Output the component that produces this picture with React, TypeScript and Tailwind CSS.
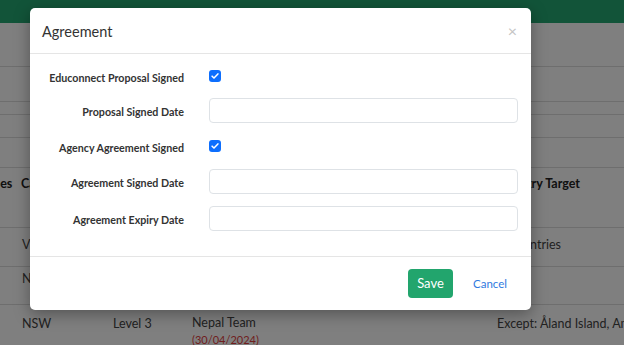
import React from "react";

function CheckBox() {
  return (
    <span className="flex h-[12px] w-[12px] items-center justify-center rounded-[3px] bg-[#0d6efd]">
      <svg viewBox="0 0 12 12" className="h-[10px] w-[10px]" fill="none">
        <path
          d="M2.5 6.2l2.3 2.3 4.7-5"
          stroke="white"
          strokeWidth={1.8}
          strokeLinecap="round"
          strokeLinejoin="round"
        />
      </svg>
    </span>
  );
}

function FieldRow({
  label,
  kind,
  height,
}: {
  label: string;
  kind: "check" | "input";
  height: string;
}) {
  return (
    <div className={`flex items-center ${height}`}>
      <label className="w-[154px] shrink-0 whitespace-nowrap pt-[4px] text-right text-[10.7px] font-bold text-[#333]">
        {label}
      </label>
      <div className="ml-[25px] flex flex-1 items-center">
        {kind === "check" ? (
          <CheckBox />
        ) : (
          <input
            type="text"
            className="h-[25px] w-full rounded-[4px] border border-[#dee2e6] bg-white px-2 text-[12px] outline-none"
          />
        )}
      </div>
    </div>
  );
}

export default function App() {
  return (
    <div
      className="relative h-[345px] w-[624px] overflow-hidden bg-white"
      style={{ fontFamily: "Lato, 'Open Sans', sans-serif" }}
    >
      {/* Page behind the modal */}
      <div className="h-[23px] bg-[#25a972]" />
      <div className="h-[44px] border-b border-[#dcdcdc]" />
      <div className="h-[35px] border-b border-[#dcdcdc]" />
      <div className="h-[13px] border-b border-[#dcdcdc]" />
      <div className="h-[23px] border-b border-[#dcdcdc]" />
      <div className="h-[30px] border-b border-[#dcdcdc]" />
      <div className="flex h-[60px] items-start whitespace-nowrap border-b border-[#dcdcdc] pt-[7px] text-[12.5px] font-bold text-[#222]">
        <span className="ml-[-20px] w-[41px] shrink-0">Types</span>
        <span className="shrink-0">Campus</span>
        <span className="ml-auto mr-[44px] shrink-0">Country Target</span>
      </div>
      <div className="flex h-[39px] items-center whitespace-nowrap border-b border-[#dcdcdc] pb-[8px] pt-[4px] text-[12.5px] text-[#444]">
        <span className="ml-[22px]">VIC</span>
        <span className="ml-auto mr-[63px]">All Countries</span>
      </div>
      <div className="flex h-[38px] items-center border-b border-[#dcdcdc] pb-[12px] text-[12.5px] text-[#444]">
        <span className="ml-[22px]">NSW</span>
      </div>
      <div className="flex whitespace-nowrap pt-[10px] text-[12.5px] text-[#444]">
        <span className="ml-[22px] w-[91px] shrink-0">NSW</span>
        <span className="w-[79px] shrink-0">Level 3</span>
        <div className="flex w-[305px] shrink-0 flex-col">
          <span className="leading-[16px]">Nepal Team</span>
          <span className="mt-[2px] text-[11px] leading-[14px] text-[#e03c3c]">(30/04/2024)</span>
        </div>
        <span className="shrink-0">Except: Åland Island, American Samoa</span>
      </div>

      {/* Backdrop */}
      <div className="absolute inset-0 bg-black/50" />

      {/* Modal */}
      <div className="absolute left-[30px] top-[8px] w-[501px] rounded-[5px] bg-white shadow-[0_4px_16px_rgba(0,0,0,0.35)]">
        <div className="flex h-[46px] items-center justify-between border-b border-[#e5e5e5] px-[12px]">
          <h2 className="pt-[3px] text-[14.5px] text-[#333]">Agreement</h2>
          <button className="mr-[2px] text-[16px] leading-none text-[#c4c4c4]">×</button>
        </div>
        <div className="flex flex-col gap-[12px] pb-[25px] pl-0 pr-[13px] pt-[12px]">
          <FieldRow label="Educonnect Proposal Signed" kind="check" height="h-[20px]" />
          <FieldRow label="Proposal Signed Date" kind="input" height="h-[25px]" />
          <FieldRow label="Agency Agreement Signed" kind="check" height="h-[22px]" />
          <FieldRow label="Agreement Signed Date" kind="input" height="h-[25px]" />
          <FieldRow label="Agreement Expiry Date" kind="input" height="h-[25px]" />
        </div>
        <div className="flex h-[54px] items-center justify-end gap-[8px] border-t border-[#e5e5e5] pr-[12px]">
          <button className="h-[29px] w-[45px] rounded-[4px] bg-[#22a56d] pt-[1px] text-[13px] text-white">
            Save
          </button>
          <button className="px-[12px] pt-[1px] text-[11.5px] text-[#2f7ae0]">Cancel</button>
        </div>
      </div>
    </div>
  );
}
